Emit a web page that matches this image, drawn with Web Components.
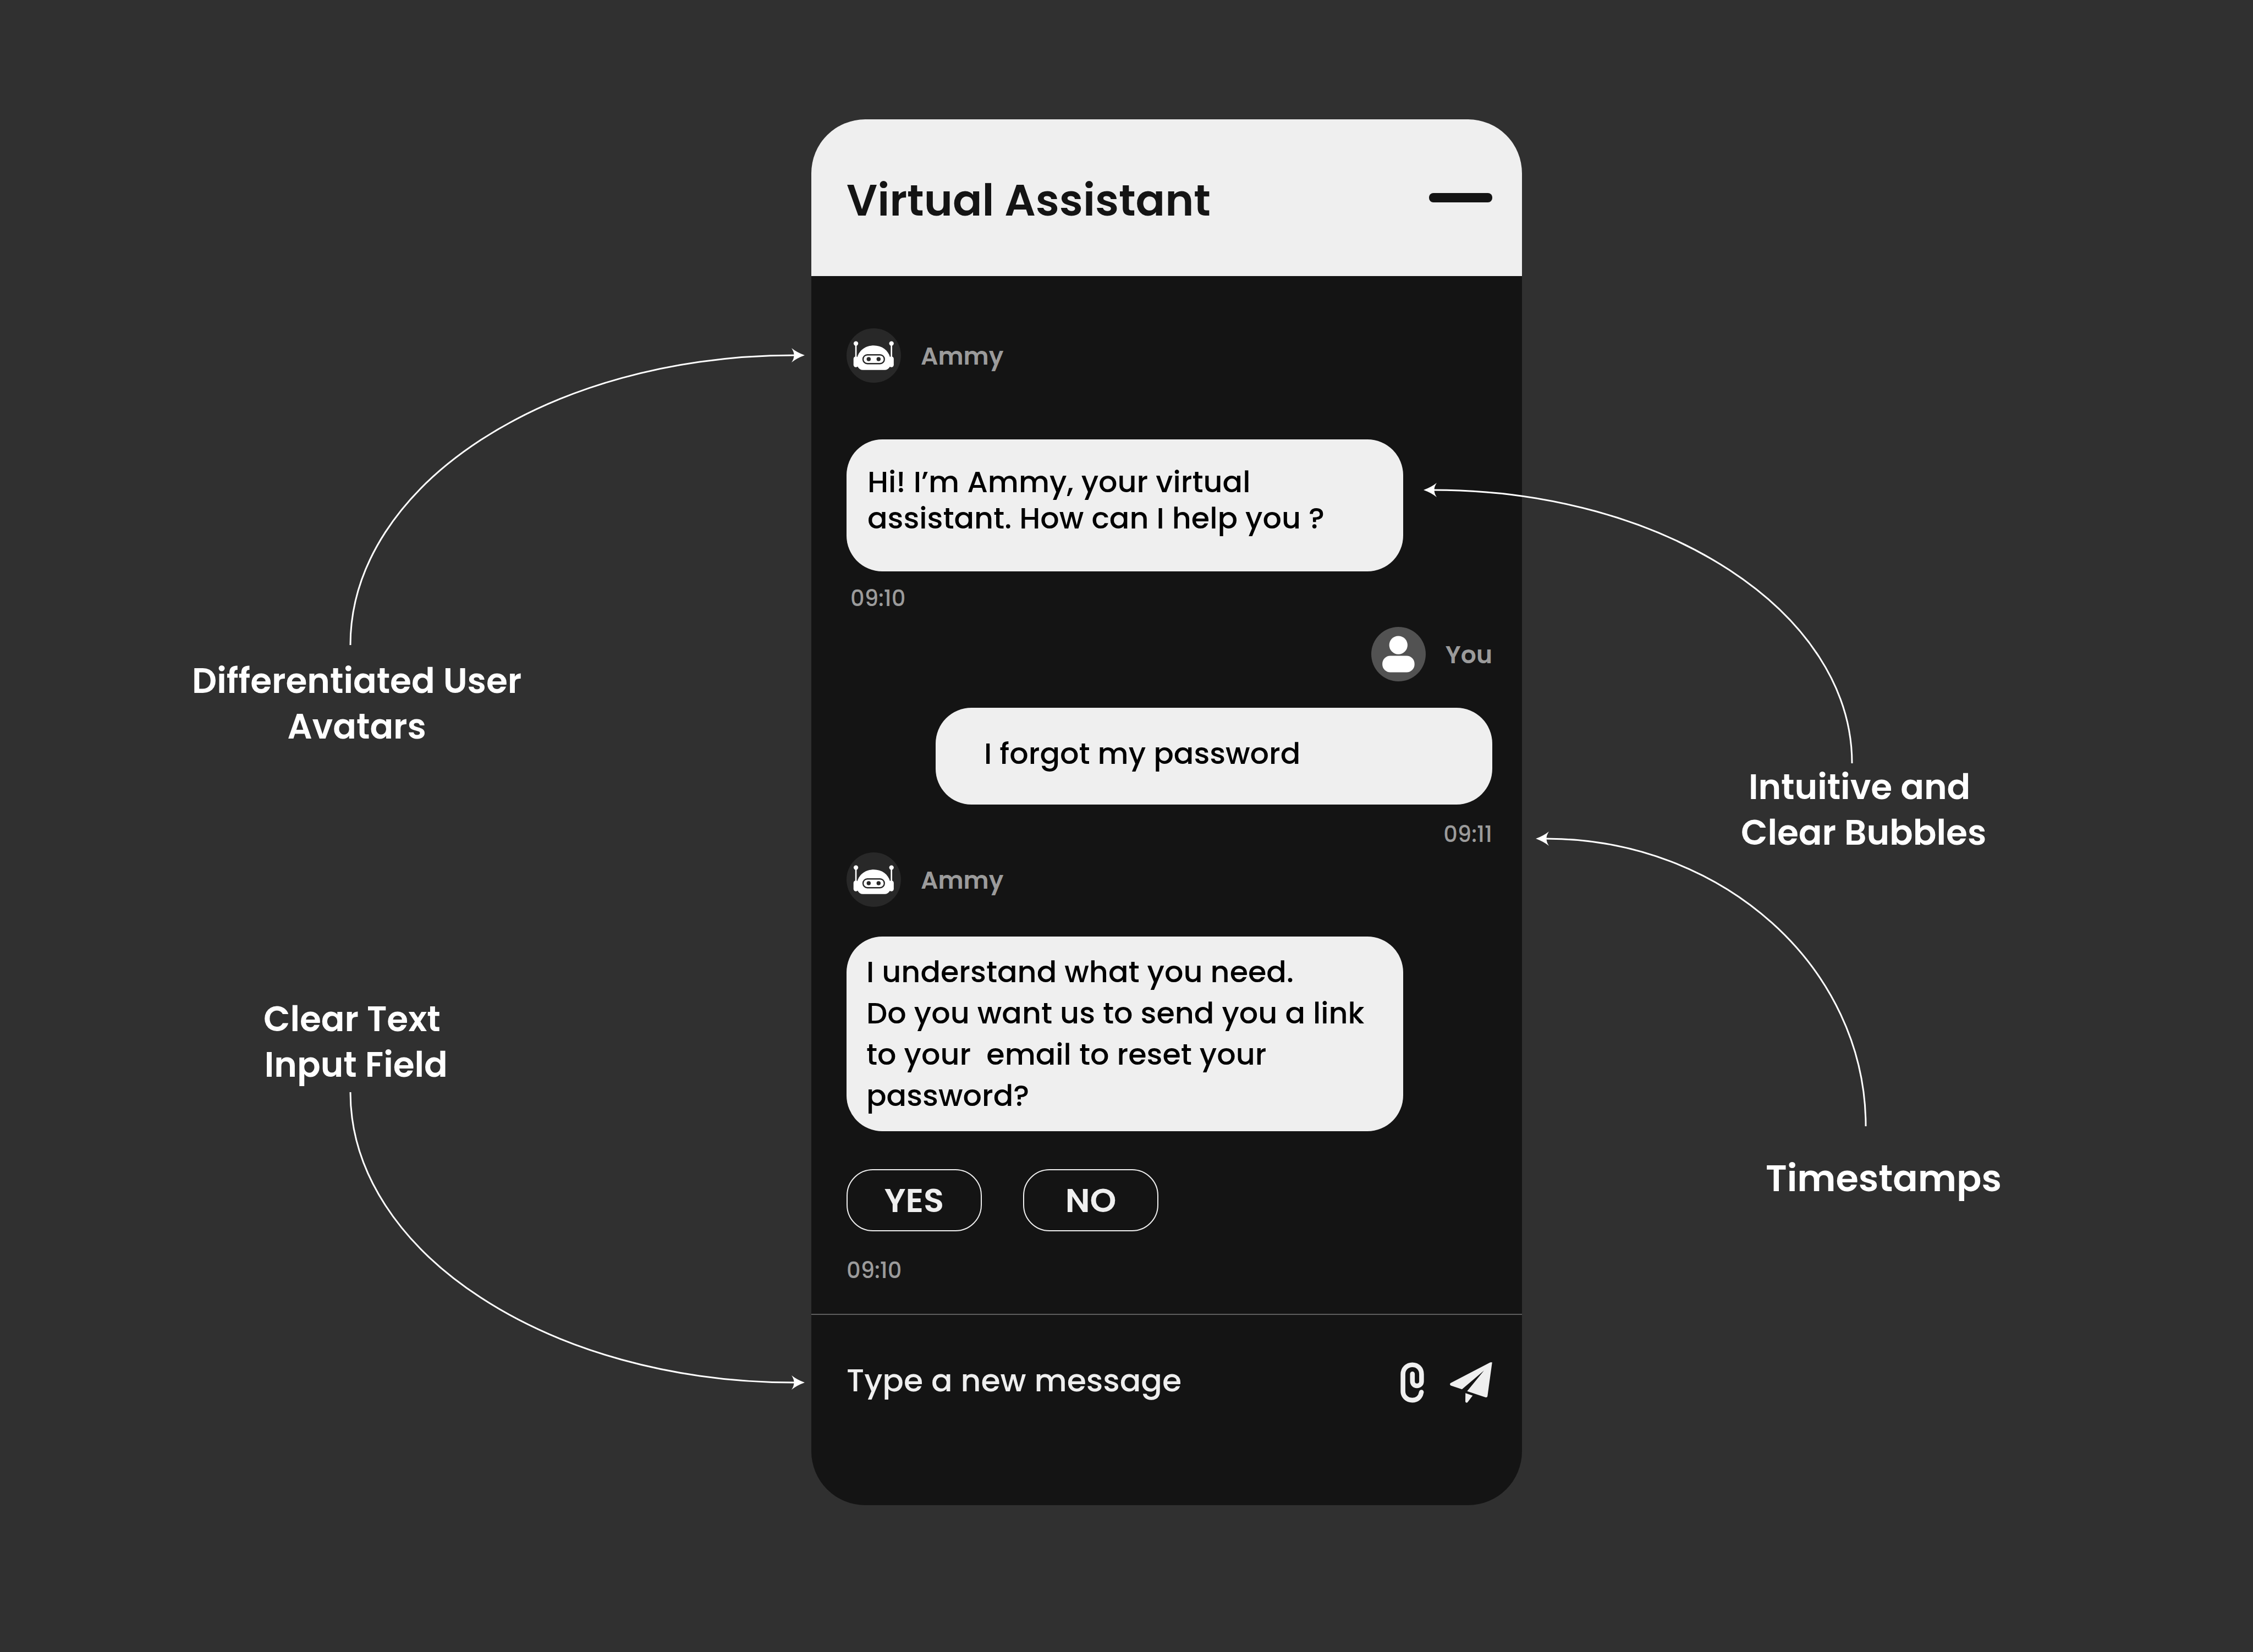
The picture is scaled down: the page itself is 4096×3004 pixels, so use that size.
<!DOCTYPE html>
<html lang="en">
<head>
<meta charset="utf-8">
<title>Virtual Assistant</title>
<style>
  body { margin: 0; background: #303030; }
</style>
</head>
<body>
<annotated-page>
  <callout-note slot="left" style="--top:633px;--indent:349px;--gap:24px;--arrow-x:635px" side="above" align="center">
    <curve-arrow slot="arrow" width="828" height="540" turn="up-right"></curve-arrow>
    Differentiated User<br>Avatars
  </callout-note>
  <callout-note slot="left" style="--top:449px;--indent:479px;--gap:8px;--arrow-x:635px" side="below" align="center">
    <curve-arrow slot="arrow" width="828" height="541" turn="down-right"></curve-arrow>
    Clear Text&nbsp;<br>Input Field
  </callout-note>

  <chat-panel heading="Virtual Assistant">
    <chat-author name="Ammy" kind="bot"></chat-author>
    <chat-bubble style="margin-top:103px;--pad:44px 38px 64px">Hi! I’m Ammy, your virtual assistant. How can I help you ?</chat-bubble>
    <chat-time style="margin-top:24px;padding-left:7px">09:10</chat-time>

    <chat-author name="You" kind="user" style="margin-top:27px"></chat-author>
    <chat-bubble own style="margin-top:48px;--pad:50px 88px 60px">I forgot my password</chat-bubble>
    <chat-time own style="margin-top:29px">09:11</chat-time>

    <chat-author name="Ammy" kind="bot" style="margin-top:8px"></chat-author>
    <chat-bubble style="margin-top:54px;--pad:27px 36px;--line:75px">I understand what you need.<br>Do you want us to send you a link to your&nbsp; email to reset your password?</chat-bubble>
    <quick-replies style="margin-top:69px" options="YES,NO"></quick-replies>
    <chat-time style="margin-top:46px">09:10</chat-time>

    <chat-composer slot="composer" hint="Type a new message"></chat-composer>
  </chat-panel>

  <callout-note slot="right" style="--top:878px;--indent:398px;--gap:2px;--arrow-x:-179px" side="above" align="center">
    <curve-arrow slot="arrow" width="781" height="510" turn="up-left"></curve-arrow>
    Intuitive and&nbsp;<br>Clear Bubbles
  </callout-note>
  <callout-note slot="right" large style="--top:-44px;--indent:443px;--gap:53px;--arrow-x:25px" side="above">
    <curve-arrow slot="arrow" width="602" height="536" turn="up-left"></curve-arrow>
    Timestamps
  </callout-note>
</annotated-page>

<script>
class Base extends HTMLElement {
  constructor() {
    super();
    this.attachShadow({ mode: "open" });
  }
  connectedCallback() { this.shadowRoot.innerHTML = this.view(); }
}

customElements.define("annotated-page", class extends Base {
  view() {
    return `
    <style>
      :host {
        display: grid; grid-template-columns: 1475fr 1292fr 1329fr; align-items: start;
        min-height: 100vh; overflow: hidden; background: #303030; color: #fff;
        font-family: Poppins, Inter, "Open Sans", sans-serif;
      }
      aside, main { min-width: 0; }
      aside { display: flex; flex-direction: column; z-index: 1; }
      main { padding: 217px 0; }
    </style>
    <aside><slot name="left"></slot></aside>
    <main><slot></slot></main>
    <aside><slot name="right"></slot></aside>`;
  }
});

customElements.define("callout-note", class extends Base {
  view() {
    return `
    <style>
      :host { display: flex; flex-direction: column; align-items: flex-start; gap: var(--gap); margin-top: var(--top); }
      :host([side="below"]) { flex-direction: column-reverse; }
      p { margin: 0 0 0 var(--indent); font-size: 63px; line-height: 83px; font-weight: 600; white-space: nowrap; }
      :host([align="center"]) p { text-align: center; }
      :host([large]) p { font-size: 67px; }
      ::slotted(curve-arrow) { margin-left: var(--arrow-x); }
    </style>
    <slot name="arrow"></slot>
    <p><slot></slot></p>`;
  }
});

customElements.define("curve-arrow", class extends Base {
  view() {
    const w = +this.getAttribute("width"), h = +this.getAttribute("height");
    const turn = this.getAttribute("turn");
    const flipX = turn.endsWith("left"), flipY = turn.startsWith("down");
    const k = 0.4477, x0 = 2, y0 = 13, x1 = w - 18;
    return `
    <style>:host { display: block; } svg { display: block; }</style>
    <svg width="${w}" height="${h}" viewBox="0 0 ${w} ${h}" aria-hidden="true">
      <g transform="translate(${flipX ? w : 0} ${flipY ? h : 0}) scale(${flipX ? -1 : 1} ${flipY ? -1 : 1})">
        <path d="M${x0} ${h} C${x0} ${y0 + (h - y0) * k} ${x0 + (x1 - x0) * k} ${y0} ${x1} ${y0}" fill="none" stroke="#fff" stroke-width="3"/>
        <path d="M${w} ${y0} Q${w - 14} ${y0 - 5} ${w - 24} ${y0 - 13} Q${w - 15} ${y0} ${w - 24} ${y0 + 13} Q${w - 14} ${y0 + 5} ${w} ${y0}Z" fill="#fff"/>
      </g>
    </svg>`;
  }
});

customElements.define("chat-panel", class extends Base {
  view() {
    return `
    <style>
      :host { display: flex; flex-direction: column; border-radius: 98px; overflow: hidden; background: #141414; }
      header {
        display: flex; align-items: center; justify-content: space-between;
        height: 285px; padding: 0 54px 0 64px; background: #efefef; color: #141414;
      }
      h1 { margin: 0; padding-top: 10px; font-size: 79px; line-height: 100px; font-weight: 600; }
      button { width: 115px; height: 17px; padding: 0; border: 0; border-radius: 8px; background: #141414; }
      section { display: flex; flex-direction: column; padding: 95px 54px 54px 64px; }
    </style>
    <header><h1>${this.getAttribute("heading")}</h1><button type="button" aria-label="Minimize"></button></header>
    <section><slot></slot></section>
    <slot name="composer"></slot>`;
  }
});

const AVATARS = {
  bot: `
    <circle cx="226" cy="226" r="226" fill="#282828"/>
    <g fill="#fff">
      <circle cx="78" cy="126" r="19"/><circle cx="373" cy="126" r="19"/>
      <path d="M72 126h12v120h-12zM367 126h12v120h-12z"/>
      <rect x="58" y="234" width="39" height="89" rx="19"/><rect x="353" y="234" width="39" height="89" rx="19"/>
      <path d="M90 238C106 182 160 143 226 143S345 182 361 238V317C350 336 334 346 316 346H136C118 346 102 336 92 317Z"/>
    </g>
    <rect x="137" y="220" width="177" height="73" rx="36" fill="none" stroke="#282828" stroke-width="11"/>
    <circle cx="184" cy="256" r="17" fill="#282828"/><circle cx="266" cy="256" r="17" fill="#282828"/>`,
  user: `
    <circle cx="226" cy="226" r="226" fill="#525252"/>
    <circle cx="225" cy="151" r="76" fill="#fff"/>
    <rect x="92" y="240" width="267" height="137" rx="66" fill="#fff"/>`
};

customElements.define("chat-author", class extends Base {
  view() {
    return `
    <style>
      :host { display: flex; align-items: center; gap: 36px; color: #9b9b9b; font-size: 44px; line-height: 56px; font-weight: 600; }
      :host([kind="user"]) { justify-content: flex-end; }
      svg { width: 99px; height: 99px; }
      span { padding-top: 3px; }
    </style>
    <svg viewBox="0 0 452 452" aria-hidden="true">${AVATARS[this.getAttribute("kind")]}</svg>
    <span>${this.getAttribute("name")}</span>`;
  }
});

customElements.define("chat-bubble", class extends Base {
  view() {
    return `
    <style>
      :host {
        display: block; box-sizing: border-box; width: 1012px; max-width: 100%; padding: var(--pad);
        border-radius: 65px; background: #efefef; color: #000;
        font-size: 54px; line-height: var(--line, 66px); font-weight: 500;
      }
      :host([own]) { align-self: flex-end; }
    </style>
    <slot></slot>`;
  }
});

customElements.define("chat-time", class extends Base {
  view() {
    return `
    <style>
      :host { display: block; color: #9b9b9b; font-size: 40px; line-height: 50px; font-weight: 500; }
      :host([own]) { text-align: right; }
    </style>
    <slot></slot>`;
  }
});

customElements.define("quick-replies", class extends Base {
  view() {
    const buttons = this.getAttribute("options").split(",")
      .map(text => `<button type="button">${text}</button>`).join("");
    return `
    <style>
      :host { display: flex; gap: 75px; }
      button {
        width: 246px; height: 113px; padding: 0; border: 2px solid #efefef; border-radius: 48px;
        background: none; color: #efefef; font: 600 61px/70px Poppins, Inter, "Open Sans", sans-serif;
      }
    </style>${buttons}`;
  }
});

customElements.define("chat-composer", class extends Base {
  view() {
    const hint = this.getAttribute("hint");
    return `
    <style>
      :host { display: block; border-top: 2px solid #5e5e5e; }
      form { display: flex; align-items: flex-end; gap: 47px; margin: 0; padding: 78px 54px 186px 64px; }
      input {
        flex: 1; min-width: 0; height: 82px; padding: 0; border: 0; outline: 0; background: none;
        color: #efefef; font: 500 57px/82px Poppins, Inter, "Open Sans", sans-serif;
      }
      input::placeholder { color: #efefef; opacity: 1; }
      button { display: block; padding: 0; border: 0; background: none; color: #efefef; }
      svg { display: block; height: 74px; }
    </style>
    <form>
      <input type="text" aria-label="${hint}" placeholder="${hint}">
      <button type="button" aria-label="Attach file">
        <svg width="43" viewBox="195 185 195 335" fill="none" stroke="currentColor" stroke-width="39" stroke-linecap="round">
          <path d="M368 432C360 476 332 498 293 498C248 498 216 465 216 425V284C216 238 250 206 293 206C338 206 369 238 369 284V342C369 365 352 380 331 380C310 380 294 364 294 340V281"/>
        </svg>
      </button>
      <button type="button" aria-label="Send">
        <svg width="77" viewBox="606 186 352 336" fill="currentColor">
          <path d="M942 186H957L918 468Q915 480 903 477L749 426L889 254L706 410L613 379Q606 375 606 368Q606 361 613 357Z"/>
          <path d="M735 442L795 462L755 515Q750 522 744 522Q734 521 734 510Z"/>
        </svg>
      </button>
    </form>`;
  }
});
</script>
</body>
</html>
